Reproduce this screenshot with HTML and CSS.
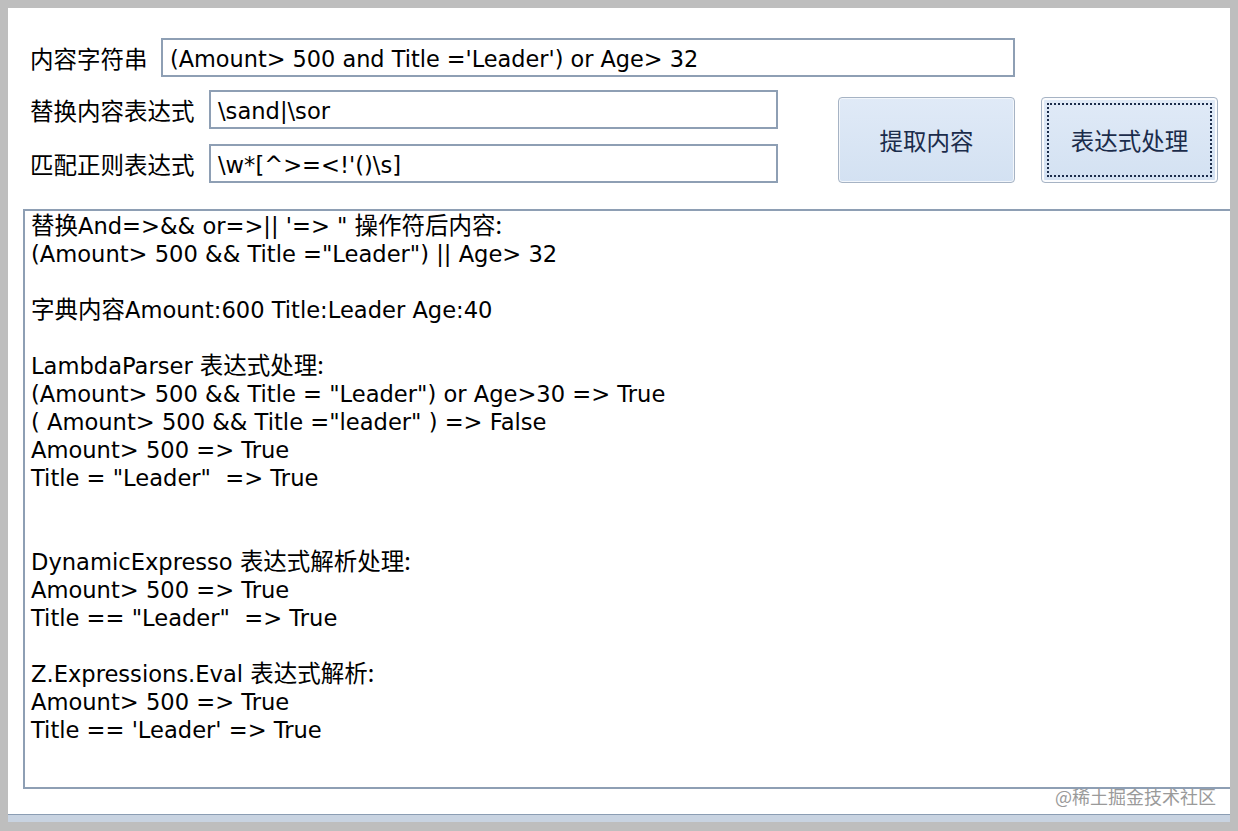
FILE: index.html
```html
<!DOCTYPE html>
<html lang="zh-CN">
<head>
<meta charset="utf-8">
<title>表达式处理</title>
<link rel="stylesheet" href="styles.css">
</head>
<body>
<div class="window">
  <div class="panel">
    <div class="form">
      <div class="row1">
        <span class="label label-short">内容字符串</span>
        <div class="input input-wide">(Amount&gt; 500 and Title ='Leader') or Age&gt; 32</div>
      </div>
      <div class="lower">
        <div class="fields">
          <div class="row">
            <span class="label label-long">替换内容表达式</span>
            <div class="input input-mid">\sand|\sor</div>
          </div>
          <div class="row">
            <span class="label label-long">匹配正则表达式</span>
            <div class="input input-mid">\w*[^&gt;=&lt;!'()\s]</div>
          </div>
        </div>
        <div class="buttons">
          <button class="btn">提取内容</button>
          <button class="btn btn-focus">表达式处理</button>
        </div>
      </div>
    </div>
    <div class="output"><div class="line"><span class="c">替换</span>And=&gt;&amp;&amp; or=&gt;|| '=&gt; " <span class="c">操作符后内容:</span></div><div class="line">(Amount&gt; 500 &amp;&amp; Title ="Leader") || Age&gt; 32</div><div class="line"> </div><div class="line"><span class="c">字典内容</span>Amount:600 Title:Leader Age:40</div><div class="line"> </div><div class="line">LambdaParser <span class="c">表达式处理:</span></div><div class="line">(Amount&gt; 500 &amp;&amp; Title = "Leader") or Age&gt;30 =&gt; True</div><div class="line">( Amount&gt; 500 &amp;&amp; Title ="leader" ) =&gt; False</div><div class="line">Amount&gt; 500 =&gt; True</div><div class="line">Title = "Leader"  =&gt; True</div><div class="line"> </div><div class="line"> </div><div class="line">DynamicExpresso <span class="c">表达式解析处理:</span></div><div class="line">Amount&gt; 500 =&gt; True</div><div class="line">Title == "Leader"  =&gt; True</div><div class="line"> </div><div class="line">Z.Expressions.Eval <span class="c">表达式解析:</span></div><div class="line">Amount&gt; 500 =&gt; True</div><div class="line">Title == 'Leader' =&gt; True</div></div>
    <div class="watermark">@稀土掘金技术社区</div>
  </div>
  <div class="status"></div>
</div>
</body>
</html>
```

FILE: styles.css
```css
html, body {
  margin: 0;
  padding: 0;
}

body {
  width: 1238px;
  height: 831px;
  overflow: hidden;
  background: #bebebe;
  font-family: "DejaVu Sans", "Noto Sans CJK SC", sans-serif;
  font-size: 22.6px;
  color: #000;
}

.window {
  padding: 8px 8px 0 8px;
}

.panel {
  position: relative;
  background: #fff;
  height: 806px;
  overflow: hidden;
}

.status {
  height: 7px;
  border-top: 1px solid #8b9db3;
  background: #c8d3e1;
}

.form {
  padding: 30px 0 0 22px;
}

.row1,
.row {
  display: flex;
  align-items: center;
}

.label {
  font-family: "Noto Sans CJK SC", sans-serif;
  font-size: 23.5px;
  line-height: 28px;
  white-space: nowrap;
}

.label-short {
  width: 131px;
}

.label-long {
  width: 179px;
}

.input {
  box-sizing: border-box;
  height: 39px;
  border: 2px solid #8e9fb4;
  padding: 2px 0 0 7px;
  line-height: 35px;
  white-space: pre;
  overflow: hidden;
  background: #fff;
}

.input-wide {
  width: 854px;
  font-size: 22.4px;
}

.input-mid {
  width: 569px;
}

.lower {
  display: flex;
  margin-top: 13px;
}

.fields {
  display: flex;
  flex-direction: column;
  gap: 15px;
}

.buttons {
  display: flex;
  gap: 26px;
  margin: 7px 0 0 60px;
}

.btn {
  position: relative;
  box-sizing: border-box;
  width: 177px;
  height: 86px;
  border: 1px solid #a6b3c4;
  border-radius: 4px;
  background: linear-gradient(#e0eaf7, #d3e1f2);
  box-shadow: inset 0 0 0 1px #f2f6fb;
  color: #1b2c4b;
  font-family: "Noto Sans CJK SC", sans-serif;
  font-size: 23.5px;
  padding: 0;
  margin: 0;
}

.btn-focus {
  box-shadow: inset 0 0 0 2px #fbfcfe;
}

.btn-focus::after {
  content: "";
  position: absolute;
  top: 5px;
  left: 5px;
  right: 5px;
  bottom: 5px;
  border: 2px dotted #1b2c4b;
}

.output {
  box-sizing: border-box;
  margin: 26px 0 0 15px;
  width: 1225px;
  height: 580px;
  border: 2px solid #8e9fb4;
  padding: 1px 0 0 6px;
  white-space: pre;
}

.line {
  height: 28px;
  line-height: 28px;
}

.c {
  font-family: "Noto Sans CJK SC", sans-serif;
  font-size: 23.5px;
  line-height: 0;
}

.watermark {
  position: absolute;
  right: 14px;
  top: 776px;
  font-family: "Noto Sans CJK SC", sans-serif;
  font-size: 18px;
  line-height: 24px;
  color: #9a9a9a;
}
```
